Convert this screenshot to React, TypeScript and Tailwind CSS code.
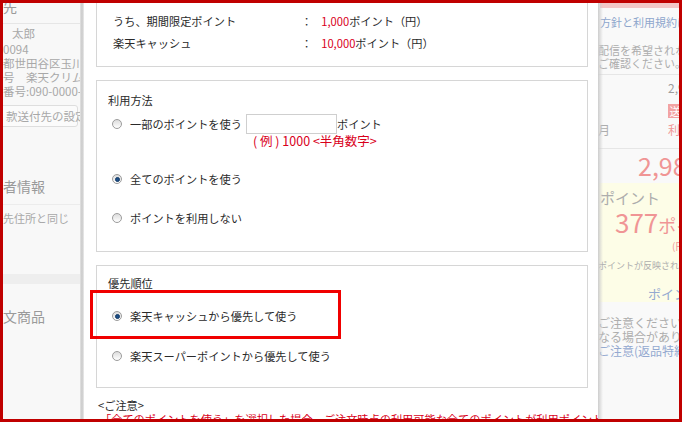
import React from "react";

const Radio = ({ checked }: { checked?: boolean }) => (
  <span className="inline-flex w-[10px] h-[10px] shrink-0 items-center justify-center rounded-full border border-[#9c9c9c] bg-gradient-to-b from-[#dcdcdc] to-[#ffffff]">
    {checked && <span className="w-[5px] h-[5px] rounded-full bg-[#1d4e86] border border-[#123a66]" />}
  </span>
);

export default function App() {
  return (
    <div className="w-[682px] h-[422px] border-[3px] border-[#c00000] overflow-hidden flex bg-white font-['Noto_Sans_CJK_JP','Noto_Sans',sans-serif]">
      {/* left dimmed page */}
      <div className="w-[77px] shrink-0 bg-[#f8f8f8] overflow-hidden whitespace-nowrap text-[#a8a8a8]">
        <div className="h-[21px] border-b border-[#e6e6e6] overflow-hidden">
          <div className="text-[14px] leading-[14px] mt-[-4px] text-[#9a9a9a]">先</div>
        </div>
        <div className="text-[11.5px] leading-[14px]">
          <div className="mt-[2px] pl-[9px]">太郎</div>
          <div className="mt-[2px]">0094</div>
          <div>都世田谷区玉川一</div>
          <div>号　楽天クリムゾン</div>
          <div>番号:090-0000-0000</div>
        </div>
        <div className="mt-[7px] ml-[-6px] h-[22px] w-[81px] border border-[#dedede] rounded-[3px] bg-[#fbfbfb] text-[11.5px] leading-[20px] pl-[8px]">
          款送付先の設定
        </div>
        <div className="mt-[51px] h-[27px] border-b border-[#ececec] text-[14px] leading-[16px] text-[#9a9a9a]">者情報</div>
        <div className="mt-[6px] text-[11px] leading-[14px]">先住所と同じ</div>
        <div className="mt-[49px] h-[10px] bg-[#eeeeee]" />
        <div className="mt-[24px] text-[14px] leading-[16px] text-[#9a9a9a]">文商品</div>
      </div>
      <div className="w-[4px] shrink-0 bg-gradient-to-r from-[#e4e4e4] via-[#c9c9c9] to-[#ececec]" />

      {/* modal */}
      <div className="w-[514px] shrink-0 bg-white pl-[12px] pr-[10px] text-[11.2px] text-[#2a2a2a]">
        {/* box1 */}
        <div className="border-x border-b border-[#d6d6d6] pt-[7px] pb-[12px] pl-[16px]">
          <div className="flex h-[22px] items-center">
            <span className="w-[188px]">うち、期間限定ポイント</span>
            <span>：</span>
            <span className="ml-[9px]"><span className="text-[#d9001b]">1,000</span>ポイント（円）</span>
          </div>
          <div className="flex h-[22px] items-center">
            <span className="w-[188px]">楽天キャッシュ</span>
            <span>：</span>
            <span className="ml-[9px]"><span className="text-[#d9001b]">10,000</span>ポイント（円）</span>
          </div>
        </div>

        {/* box2 */}
        <div className="mt-[13px] border border-[#d6d6d6] pt-[11px] pb-[25px]">
          <div className="pl-[11px] leading-[16px]">利用方法</div>
          <div className="mt-[6px] flex items-center h-[20px] pl-[15px]">
            <Radio />
            <span className="ml-[8px] w-[116px]">一部のポイントを使う</span>
            <span className="w-[91px] h-[20px] border border-[#cfcfcf] bg-white" />
            <span>ポイント</span>
          </div>
          <div className="pl-[156px] text-[12.5px] leading-[14px] text-[#d9001b] whitespace-nowrap">( 例 ) 1000 &lt;半角数字&gt;</div>
          <div className="mt-[23px] flex items-center h-[16px] pl-[15px]">
            <Radio checked />
            <span className="ml-[8px]">全てのポイントを使う</span>
          </div>
          <div className="mt-[23px] flex items-center h-[16px] pl-[15px]">
            <Radio />
            <span className="ml-[8px]">ポイントを利用しない</span>
          </div>
        </div>

        {/* box3 */}
        <div className="relative mt-[13px] border border-[#d6d6d6] pt-[9px] pb-[23px]">
          <div className="pl-[11px] leading-[16px]">優先順位</div>
          <div className="mt-[17px] flex items-center h-[16px] pl-[15px]">
            <Radio checked />
            <span className="ml-[8px]">楽天キャッシュから優先して使う</span>
          </div>
          <div className="mt-[24px] flex items-center h-[16px] pl-[15px]">
            <Radio />
            <span className="ml-[8px]">楽天スーパーポイントから優先して使う</span>
          </div>
          <div className="absolute left-[-7px] top-[24px] w-[251px] h-[49px] border-[3px] border-[#f00000]" />
        </div>

        <div className="mt-[10px] pl-[2px] leading-[14px]">&lt;ご注意&gt;</div>
        <div className="pl-[4px] leading-[14px] text-[#d9001b] whitespace-nowrap">「全てのポイントを使う」を選択した場合、ご注文時点の利用可能な全てのポイントが利用ポイント</div>
      </div>

      {/* right dimmed page */}
      <div className="relative flex-1 bg-[#f9f9f9] overflow-hidden whitespace-nowrap text-[#adadad]">
        <div className="absolute left-0 top-0 bottom-0 w-[5px] bg-gradient-to-r from-[#cdcdcd] to-[#f9f9f900]" />
        <div className="h-[5px] ml-[2px] bg-[#f3c6c6]" />
        <div className="mt-[7px] pl-[2px] text-[11px] leading-[14px] text-[#8ea6cc]">方針と利用規約に同意</div>
        <div className="border-b border-[#e6e6e6] pb-[4px] mt-[15px] text-[11px] leading-[13px]">
          <div>配信を希望されない</div>
          <div>ご確認ください。</div>
        </div>
        <div className="border-b border-[#e6e6e6] pb-[11px]">
          <div className="mt-[6px] pl-[70px] text-[12px] leading-[14px] text-[#9d9d9d]">2,980</div>
          <div className="mt-[9px] ml-[70px] h-[14px] w-[14px] bg-[#f2a3a3] text-white text-[11px] leading-[14px] text-center">送</div>
          <div className="mt-[5px] flex text-[12px] leading-[14px]">
            <span>月</span>
            <span className="ml-[58px] text-[#f09a9a]">利</span>
          </div>
        </div>
        <div className="mt-[3px] pl-[40px] text-[25px] leading-[26px] text-[#f09595]">2,980</div>
        <div className="mt-[5px] h-[119px] bg-[#fdfde7] pt-[6px] pb-[4px]">
          <div className="pl-[2px] text-[15px] leading-[18px]">ポイント</div>
          <div className="mt-[1px] pl-[17px] leading-[28px] text-[#f09595]">
            <span className="text-[26px]">377</span>
            <span className="text-[18px]">ポイント</span>
          </div>
          <div className="pl-[74px] text-[10px] leading-[12px] text-[#f09595]">(円)</div>
          <div className="mt-[8px] text-[9px] leading-[12px]">ポイントが反映されています</div>
          <div className="mt-[14px] pl-[50px] text-[13px] leading-[16px] text-[#94a9d0]">ポイント</div>
        </div>
        <div className="mt-[14px] text-[12px] leading-[14px]">
          <div>ご注意ください。実際と異</div>
          <div>なる場合があります。</div>
          <div className="text-[#94a9d0]">ご注意(返品特約等)</div>
        </div>
      </div>
    </div>
  );
}
